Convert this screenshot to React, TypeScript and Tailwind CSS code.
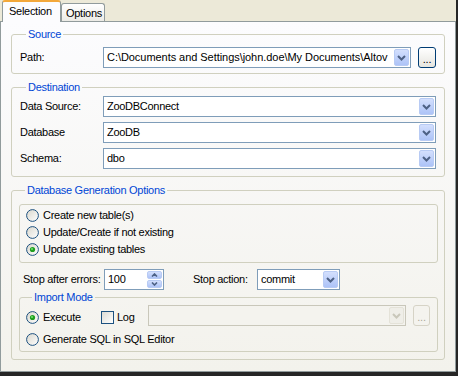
import { useId } from "react"
import clsx from "clsx"

function DropButton({ disabled }: { disabled?: boolean }) {
  return (
    <div
      className={clsx(
        "flex h-[17px] w-[15px] shrink-0 items-center justify-center rounded-[2px] border",
        disabled
          ? "border-[#e4e2d8] bg-[#efeee8]"
          : "border-[#b8cbf4] bg-linear-to-b from-[#d3dffd] to-[#adc3f7]"
      )}
    >
      <svg width="9" height="6" viewBox="0 0 9 6">
        <path
          d="M1 1l3.5 3.5L8 1"
          fill="none"
          stroke={disabled ? "#c9c7ba" : "#4d6185"}
          strokeWidth="2"
        />
      </svg>
    </div>
  )
}

function Combo({
  value,
  disabled,
  className,
  textClassName,
}: {
  value?: string
  disabled?: boolean
  className?: string
  textClassName?: string
}) {
  return (
    <div
      className={clsx(
        "flex h-[21px] items-center border pr-[1px] pl-[3px]",
        disabled ? "border-[#c9c7ba] bg-[#f4f3ee]" : "border-[#7f9db9] bg-white",
        className
      )}
    >
      <span className={clsx("mr-[4px] flex-1 overflow-hidden whitespace-nowrap", textClassName)}>
        {value}
      </span>
      <DropButton disabled={disabled} />
    </div>
  )
}

function DotsButton({ disabled }: { disabled?: boolean }) {
  return (
    <div
      className={clsx(
        "flex h-[21px] shrink-0 items-end justify-center rounded-[3px] border pb-[3px] leading-[9px]",
        disabled
          ? "w-[17px] border-[#d6d3c6] bg-[#f4f3ee] text-[#aca899]"
          : "w-[18px] border-[#003c74] bg-linear-to-b from-white to-[#e6e5df] text-black"
      )}
    >
      ...
    </div>
  )
}

function Radio({ checked }: { checked?: boolean }) {
  const id = useId()
  return (
    <svg width="13" height="13" viewBox="0 0 13 13" className="shrink-0">
      <defs>
        <linearGradient id={id} x1="0" y1="0" x2="1" y2="1">
          <stop offset="0" stopColor="#d8d6cc" />
          <stop offset="1" stopColor="#ffffff" />
        </linearGradient>
      </defs>
      <circle cx="6.5" cy="6.5" r="5.9" fill={`url(#${id})`} stroke="#1c5180" strokeWidth="1" />
      {checked && (
        <>
          <circle cx="6.5" cy="6.5" r="2.6" fill="#1f9e1f" />
          <circle cx="6" cy="6" r="1.1" fill="#6ce06c" />
        </>
      )}
    </svg>
  )
}

function RadioRow({ label, checked }: { label: string; checked?: boolean }) {
  return (
    <div className="flex h-[17px] items-center gap-[4px]">
      <Radio checked={checked} />
      <span>{label}</span>
    </div>
  )
}

function Legend({ children }: { children: string }) {
  return <legend className="ml-[6px] px-[2px] leading-[13px] text-[#0046d5]">{children}</legend>
}

function SpinHalf({ up }: { up?: boolean }) {
  return (
    <div className="flex h-[9px] w-[15px] items-center justify-center rounded-[2px] border border-[#b8cbf4] bg-linear-to-b from-[#d3dffd] to-[#adc3f7]">
      <svg width="7" height="4" viewBox="0 0 7 4">
        <path
          d={up ? "M1 3.5l2.5-2.5L6 3.5" : "M1 0.5l2.5 2.5L6 0.5"}
          fill="none"
          stroke="#4d6185"
          strokeWidth="1.6"
        />
      </svg>
    </div>
  )
}

export default function App() {
  return (
    <div className="h-[376px] w-[458px] bg-[#262626] font-['Liberation_Sans',Arial,sans-serif] text-[11px] leading-[13px] tracking-[-0.28px] text-black">
      <div className="flex h-[372px] w-[456px] flex-col bg-[#ece9d8]">
        <div className="flex h-[21px] shrink-0 items-end pl-[2px]">
          <div className="relative z-10 -mb-px h-[22px] w-[59px] rounded-t-[3px] border-x border-t-2 border-x-[#919b9c] border-t-[#f3a83a] bg-[#fcfcfe] pt-[3px] pl-[6px]">
            Selection
          </div>
          <div className="h-[18px] w-[44px] rounded-t-[3px] border-x border-t border-[#919b9c] bg-linear-to-b from-white to-[#ecebe6] pt-[3px] pl-[4px]">
            Options
          </div>
        </div>

        <div className="flex flex-1 flex-col border border-[#919b9c] bg-linear-to-b from-[#fcfcfe] to-[#f3f2ec] px-[10px] pt-[6px]">
          <fieldset className="rounded-[3px] border border-[#d0d0bf] pr-[8px] pb-[5px] pl-[8px]">
            <Legend>Source</Legend>
            <div className="mt-[6px] flex h-[21px] items-center">
              <span className="w-[83px] shrink-0">Path:</span>
              <Combo
                className="flex-1"
                textClassName="tracking-[-0.05px]"
                value={"C:\\Documents and Settings\\john.doe\\My Documents\\Altov"}
              />
              <div className="ml-[7px]">
                <DotsButton />
              </div>
            </div>
          </fieldset>

          <fieldset className="mt-[7px] rounded-[3px] border border-[#d0d0bf] pr-[8px] pb-[7px] pl-[8px]">
            <Legend>Destination</Legend>
            <div className="mt-[2px] flex flex-col gap-[5px]">
              {[
                ["Data Source:", "ZooDBConnect"],
                ["Database", "ZooDB"],
                ["Schema:", "dbo"],
              ].map(([label, value]) => (
                <div key={label} className="flex h-[21px] items-center">
                  <span className="w-[83px] shrink-0">{label}</span>
                  <Combo className="flex-1" value={value} />
                </div>
              ))}
            </div>
          </fieldset>

          <fieldset className="mt-[7px] rounded-[3px] border border-[#d0d0bf] pr-[6px] pb-[7px] pl-[7px]">
            <Legend>Database Generation Options</Legend>
            <div className="mt-[7px] rounded-[3px] border border-[#d0d0bf] pt-[2px] pb-[4px] pl-[6px]">
              <RadioRow label="Create new table(s)" />
              <RadioRow label="Update/Create if not existing" />
              <RadioRow label="Update existing tables" checked />
            </div>

            <div className="mt-[6px] flex h-[21px] items-center">
              <span className="w-[85px] shrink-0 pl-[4px]">Stop after errors:</span>
              <div className="flex h-[21px] w-[60px] border border-[#7f9db9] bg-white">
                <span className="flex-1 pl-[3px] leading-[19px]">100</span>
                <div className="flex flex-col gap-px py-px pr-px">
                  <SpinHalf up />
                  <SpinHalf />
                </div>
              </div>
              <span className="ml-[29px] w-[64px] shrink-0">Stop action:</span>
              <Combo className="w-[83px]" value="commit" />
            </div>

            <fieldset className="mt-[1px] rounded-[3px] border border-[#d0d0bf] pr-[7px] pb-[5px] pl-[6px]">
              <Legend>Import Mode</Legend>
              <div className="mt-[1px] flex h-[21px] items-start">
                <div className="mt-[6px] flex h-[13px] w-[75px] shrink-0 items-center gap-[4px]">
                  <Radio checked />
                  <span>Execute</span>
                </div>
                <div className="mt-[6px] flex h-[13px] w-[47px] shrink-0 items-center gap-[3px]">
                  <div className="h-[13px] w-[13px] border border-[#1c5180] bg-linear-to-br from-[#dcdbd4] to-white" />
                  <span>Log</span>
                </div>
                <Combo className="flex-1" disabled />
                <div className="ml-[7px]">
                  <DotsButton disabled />
                </div>
              </div>
              <div className="mt-[7px] flex h-[13px] items-center gap-[4px]">
                <Radio />
                <span>Generate SQL in SQL Editor</span>
              </div>
            </fieldset>
          </fieldset>
        </div>
      </div>
    </div>
  )
}
